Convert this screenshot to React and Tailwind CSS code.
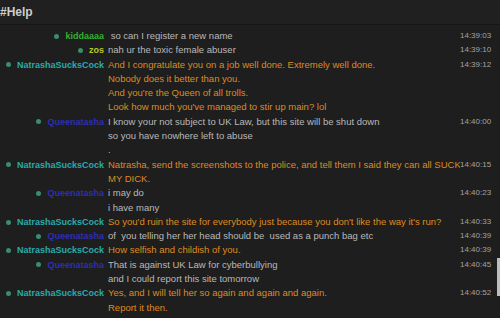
import React from 'react';

// Nick colours as they appear in the log
const NICKS = {
  kiddaaaa: 'text-[#2eb32e]',
  zos: 'text-[#b8c823]',
  NatrashaSucksCock: 'text-[#2aabab]',
  Queenatasha: 'text-[#2f2fb0]',
};

const MESSAGES = [
  { nick: 'kiddaaaa', time: '14:39:03', lines: [' so can I register a new name'] },
  { nick: 'zos', time: '14:39:10', lines: ['nah ur the toxic female abuser'] },
  {
    nick: 'NatrashaSucksCock',
    time: '14:39:12',
    orange: true,
    lines: [
      'And I congratulate you on a job well done. Extremely well done.',
      'Nobody does it better than you.',
      "And you're the Queen of all trolls.",
      "Look how much you've managed to stir up main? lol",
    ],
  },
  {
    nick: 'Queenatasha',
    time: '14:40:00',
    lines: [
      'I know your not subject to UK Law, but this site will be shut down',
      'so you have nowhere left to abuse',
      '.',
    ],
  },
  {
    nick: 'NatrashaSucksCock',
    time: '14:40:15',
    orange: true,
    lines: [
      'Natrasha, send the screenshots to the police, and tell them I said they can all SUCK',
      'MY DICK.',
    ],
  },
  { nick: 'Queenatasha', time: '14:40:23', lines: ['i may do', 'i have many'] },
  {
    nick: 'NatrashaSucksCock',
    time: '14:40:33',
    orange: true,
    lines: ["So you'd ruin the site for everybody just because you don't like the way it's run?"],
  },
  {
    nick: 'Queenatasha',
    time: '14:40:39',
    lines: ['of  you telling her her head should be  used as a punch bag etc'],
  },
  { nick: 'NatrashaSucksCock', time: '14:40:39', orange: true, lines: ['How selfish and childish of you.'] },
  {
    nick: 'Queenatasha',
    time: '14:40:45',
    lines: ['That is against UK Law for cyberbullying', 'and I could report this site tomorrow'],
  },
  {
    nick: 'NatrashaSucksCock',
    time: '14:40:52',
    orange: true,
    lines: [
      'Yes, and I will tell her so again and again and again.',
      'Report it then.',
      "Whatever. Go ahead and tell them everything, I don't think anybody will really care about it at all",
    ],
  },
];

const Row = ({ msg }) => (
  <div className="flex">
    <div className="w-[104px] shrink-0 flex items-start justify-end">
      <div className="flex items-center h-[14.3px] gap-[6px]">
        <span className="w-[5px] h-[5px] rounded-full bg-[#3a8c6c]" />
        <span className={`font-bold text-[9px] ${NICKS[msg.nick]}`}>{msg.nick}</span>
      </div>
    </div>
    <div
      className={`flex-1 pl-[4px] whitespace-pre overflow-hidden ${
        msg.orange ? 'text-[#df8b1f]' : 'text-[#b9b9b9]'
      }`}
    >
      {msg.lines.map((line, i) => (
        <div key={i}>{line}</div>
      ))}
    </div>
    <div className="w-[40px] shrink-0 pr-[10px] text-right text-[8px] text-[#a3a3a3]">
      {msg.time}
    </div>
  </div>
);

export default function App() {
  return (
    <div className="relative w-[500px] h-[318px] overflow-hidden bg-[#1e1e1e] font-['Liberation_Sans',Arial,sans-serif]">
      {/* Channel header */}
      <div className="h-[25px] flex items-center bg-[#202020] border-b border-[#161616]">
        <span className="text-[12px] font-bold text-[#cdcdcd]">#Help</span>
      </div>

      {/* Log */}
      <div className="pt-[4px] text-[9.5px] leading-[14.3px]">
        {MESSAGES.map((msg, i) => (
          <Row key={i} msg={msg} />
        ))}
      </div>

      {/* Scrollbar thumb */}
      <div className="absolute right-0 top-[258px] w-[3px] h-[38px] bg-[#bdbdbd]" />
    </div>
  );
}
